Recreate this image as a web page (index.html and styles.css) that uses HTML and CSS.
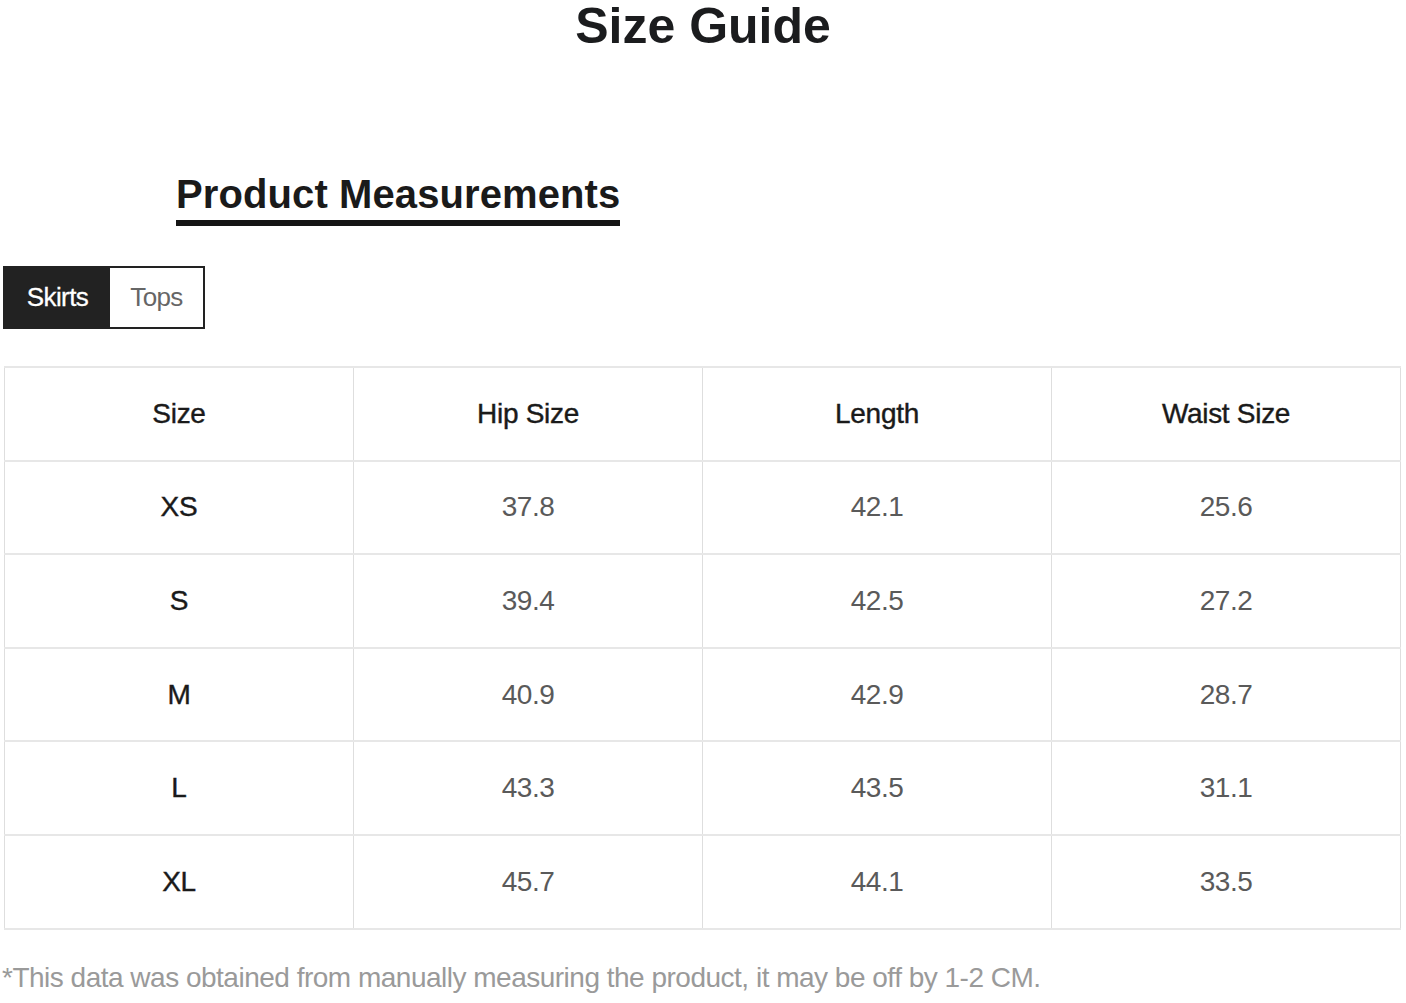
FILE: index.html
```html
<!DOCTYPE html>
<html lang="en">
<head>
<meta charset="utf-8">
<title>Size Guide</title>
<link rel="stylesheet" href="styles.css">
</head>
<body>
<main class="page">
  <h1 class="title">Size Guide</h1>
  <h2 class="section-title"><span class="section-title-text">Product Measurements</span></h2>
  <div class="tabs">
    <button class="tab tab-active" type="button">Skirts</button>
    <button class="tab" type="button">Tops</button>
  </div>
  <table class="size-table">
    <thead>
      <tr><th>Size</th><th>Hip Size</th><th>Length</th><th>Waist Size</th></tr>
    </thead>
    <tbody>
      <tr><th>XS</th><td>37.8</td><td>42.1</td><td>25.6</td></tr>
      <tr><th>S</th><td>39.4</td><td>42.5</td><td>27.2</td></tr>
      <tr><th>M</th><td>40.9</td><td>42.9</td><td>28.7</td></tr>
      <tr><th>L</th><td>43.3</td><td>43.5</td><td>31.1</td></tr>
      <tr><th>XL</th><td>45.7</td><td>44.1</td><td>33.5</td></tr>
    </tbody>
  </table>
  <p class="note">*This data was obtained from manually measuring the product, it may be off by 1-2 CM.</p>
</main>
</body>
</html>
```
FILE: styles.css
```css
html, body {
  margin: 0;
  padding: 0;
  background: #ffffff;
}

body {
  font-family: "Liberation Sans", Arial, sans-serif;
  color: #1a1a1a;
}

.page {
  display: flex;
  flex-direction: column;
  align-items: flex-start;
}

.title {
  align-self: stretch;
  margin: -2px 0 0 0;
  font-size: 50px;
  line-height: 56px;
  font-weight: 700;
  text-align: center;
  color: #1b1c1e;
}

.section-title {
  margin: 117px 0 0 176px;
  font-size: 40px;
  line-height: 46px;
  font-weight: 700;
}

.section-title-text {
  display: inline-block;
  padding-bottom: 3px;
  border-bottom: 6px solid #151515;
  color: #1a1a1a;
  letter-spacing: 0.1px;
}

.tabs {
  display: flex;
  margin: 40px 0 0 3px;
  border: 2px solid #222;
  height: 63px;
  box-sizing: border-box;
}

.tab {
  font-family: "Liberation Sans", Arial, sans-serif;
  font-size: 26px;
  letter-spacing: -0.6px;
  border: 0;
  margin: 0;
  background: #fff;
  color: #666;
  padding: 0;
  width: 93px;
  cursor: pointer;
}

.tab-active {
  background: #222;
  color: #fff;
  width: 105px;
  -webkit-text-stroke: 0.3px #fff;
}

.size-table {
  margin: 37px 0 0 4px;
  width: 1397px;
  table-layout: fixed;
  border-collapse: collapse;
  font-size: 28px;
}

.size-table th,
.size-table td {
  height: 91.6px;
  padding: 0;
  text-align: center;
  vertical-align: middle;
  border-top: 2px solid #e7e7e7;
  border-bottom: 2px solid #e7e7e7;
  border-left: 1px solid #dedede;
  border-right: 1px solid #dedede;
}

.size-table th {
  font-weight: 400;
  color: #1a1a1a;
  letter-spacing: -0.3px;
  -webkit-text-stroke: 0.4px #1a1a1a;
}

.size-table td {
  color: #5a5a5a;
  letter-spacing: -0.5px;
}

.note {
  margin: 32px 0 0 2px;
  font-size: 28px;
  letter-spacing: -0.5px;
  color: #9a9a9a;
}
```
